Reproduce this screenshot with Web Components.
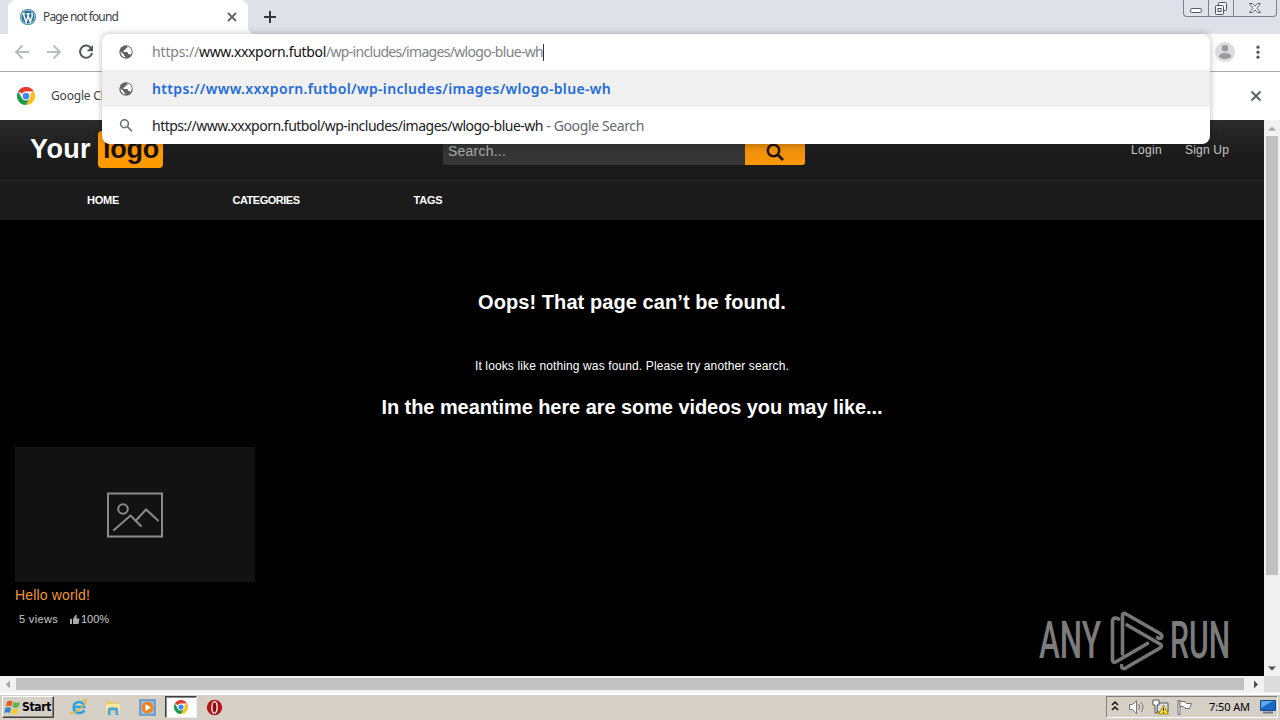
<!DOCTYPE html>
<html lang="en"><head><meta charset="utf-8"><title>Page not found</title>
<style>html,body{margin:0;width:1280px;height:720px;overflow:hidden;background:#000}</style></head>
<body><desktop-screen></desktop-screen>
<script>
const define=(name,css,html)=>customElements.define(name,class extends HTMLElement{
  constructor(){super();this.attachShadow({mode:'open'}).innerHTML=`<style>*{box-sizing:border-box}svg{display:block;flex:none}${css}</style>${html}`;}
});

/* One line of text tracked (or squeezed) to the width given in its "w" attribute. */
customElements.define('fit-text',class extends HTMLElement{
  constructor(){super();this.attachShadow({mode:'open'}).innerHTML='<style>:host{display:inline-block;white-space:pre;flex:none}span{display:inline-block;transform-origin:0 50%}</style><span><slot></slot></span>';}
  connectedCallback(){
    const s=this.shadowRoot.querySelector('span'),w=+this.getAttribute('w');
    const now=s.getBoundingClientRect().width,n=this.textContent.length;
    if(!w||!now)return;
    this.style.width=w+'px';
    if(this.hasAttribute('squeeze'))s.style.transform=`scaleX(${w/now})`;
    else s.style.letterSpacing=(w-now)/n+'px';
  }
});

define('chrome-logo',':host{display:block;width:18px;height:18px}svg{width:100%;height:100%}',
`<svg viewBox="0 0 24 24"><circle cx="12" cy="12" r="12" fill="#fff"/>
<path d="M12 12 1.6 6A12 12 0 0 1 22.4 6H12z" fill="#e33b2e"/><path d="M12 12 22.4 6A12 12 0 0 1 12 24l5.2-9z" fill="#fbc116"/><path d="M12 12l5.2 3L12 24A12 12 0 0 1 1.6 6l5.2 9z" fill="#1e9a4b"/>
<circle cx="12" cy="12" r="6" fill="#fff"/><circle cx="12" cy="12" r="4.5" fill="#4587ee"/></svg>`);

define('globe-icon',':host{display:block;width:16px;height:16px}',
`<svg width="16" height="16" viewBox="0 0 16 16"><circle cx="8" cy="8" r="6.7" fill="#5f6368"/><path d="M9.3 2.3c.2 1.7-.4 2.3-1.8 2.3-.1 1.4-.8 1.8-2 1.8v1.5h3.2c1.2 0 1.4.8 1.4 2 1.2-.1 2 .4 2.3 1.2A5.4 5.4 0 0 0 9.3 2.3zM2.6 7.4c-.1 3 1.5 5.4 4.6 6v-1.3c-.9 0-1.3-.6-1.3-1.6z" fill="#fff"/></svg>`);

define('window-buttons',`:host{display:flex;width:94px;height:17px;margin-right:3px;border:1px solid #7d828a;border-top:0;border-radius:0 0 4px 4px;background:#e0e3e9}
i{display:flex;justify-content:center;align-items:center;border-right:1px solid #7d828a}i:last-child{border:0}`,
`<i style="width:25px"><svg width="14" height="16"><rect x="1.5" y="8.5" width="11" height="4" rx="1.5" fill="#fff" stroke="#555b68"/></svg></i>
<i style="width:26px"><svg width="14" height="16" fill="#f4f5f8" stroke="#4d5361"><rect x="4.500" y="2.500" width="8" height="8" rx="1"/><rect x="1.500" y="5.500" width="8" height="9" rx="1"/><rect x="4" y="8.500" width="3" height="3"/></svg></i>
<i style="width:42px"><svg width="14" height="16"><path d="M1.500 3.500H4.500L7 6.300 9.500 3.500H12.500L8.800 8.200 12.500 12.500H9.500L7 9.900 4.500 12.500H1.500L5.200 8.200Z" fill="#fff" stroke="#5a606c"/></svg></i>`);

define('tab-strip',`:host{display:flex;height:34px;background:#dee1e8;font:12px/34px "Noto Sans",sans-serif;color:#3c4043}
.tab{width:240px;margin-left:8px;background:#fff;border-radius:8px 8px 0 0;display:flex;align-items:center;padding:0 10px 0 12px}
.tab fit-text{margin-left:7px;flex:1}.plus{margin:10px 0 0 15px}window-buttons{margin-left:auto}.x{margin-left:auto}
.foot{align-self:flex-end;width:8px;height:8px;background:radial-gradient(circle at 100% 0,#0000 8px,#fff 8.5px)}`,
`<div class="tab"><svg width="16" height="16" viewBox="0 0 16 16"><circle cx="8" cy="8" r="8" fill="#2b779d"/><circle cx="8" cy="8" r="6.900" fill="none" stroke="#c6dce7" stroke-width=".8"/><path d="M2.300 4.800h3M6.600 4.800h3.200M3.400 5l2.700 8 2-5.800M7.600 5l2.700 8 1.900-5.900c.5-1.500-.5-2.200-.5-3.400" fill="none" stroke="#fff" stroke-width="1.400"/></svg>
<fit-text w="75">Page not found</fit-text><svg class="x" width="12" height="12"><path d="m2 2 8 8m0-8-8 8" stroke="#5f6368" stroke-width="1.800"/></svg></div><div class="foot"></div>
<svg class="plus" style="margin-left:7px" width="14" height="14"><path d="M7 1v12M1 7h12" stroke="#34373c" stroke-width="2"/></svg><window-buttons></window-buttons>`);

define('tool-bar',`:host{display:flex;height:38px;background:#fff;border-bottom:1px solid #a9abad;align-items:center;padding:0 14px 1px 14px;gap:16px}.avatar{margin-left:auto}.dots{margin-left:-1px}`,
`<svg width="16" height="16" fill="none" stroke="#b9bbbe" stroke-width="1.800"><path d="M15 8H2M8.500 1.500 2 8l6.500 6.500"/></svg>
<svg width="16" height="16" fill="none" stroke="#b9bbbe" stroke-width="1.800"><path d="M1 8h13M7.500 1.500 14 8l-6.500 6.500"/></svg>
<svg width="16" height="16"><path d="M13.200 4.200A6.100 6.100 0 1 0 14.100 9" fill="none" stroke="#55585d" stroke-width="2"/><path d="M15 1v6.300H8.700z" fill="#55585d"/></svg>
<svg class="avatar" width="20" height="20"><circle cx="10" cy="10" r="10" fill="#dcdcde"/><circle cx="10" cy="6.200" r="3.200" fill="#9b9b9e"/><ellipse cx="10" cy="14" rx="6.200" ry="3" fill="#9b9b9e"/></svg>
<svg class="dots" width="16" height="16" fill="#55585d"><circle cx="8" cy="3.200" r="1.600"/><circle cx="8" cy="8.200" r="1.600"/><circle cx="8" cy="13.200" r="1.600"/></svg>`);

define('info-bar',`:host{display:flex;height:48px;background:#fff;align-items:center;padding:0 18px 0 17px;font:12px/48px "Noto Sans",sans-serif;color:#3c4043}fit-text{margin-left:16px}.x{margin-left:auto}`,
`<chrome-logo></chrome-logo><fit-text w="57">Google Ch</fit-text><svg class="x" width="12" height="12"><path d="m1.500 1.500 9 9m0-9-9 9" stroke="#5f6368" stroke-width="2"/></svg>`);

define('suggestion-row',`:host{display:flex;height:37px;align-items:center;padding-left:16px;font:14px/36px "Noto Sans",sans-serif;color:#202124}
:host([selected]){background:#f0f0f1}.txt{display:flex;margin-left:18px;align-items:center}`,
`<slot name="icon"></slot><div class="txt"><slot></slot></div>`);

define('omni-box',`:host{display:block;width:1108px;height:110px;background:#fff;border-radius:8px;overflow:hidden;box-shadow:0 0 6px 1px rgba(0,0,0,.22)}
.g{color:#808285}.b{color:#1f6bdc;font-weight:600}.s{color:#66696d}.caret{width:1px;height:17px;background:#333}.k{color:#111}
suggestion-row:first-of-type{height:36px}`,
`<suggestion-row><globe-icon slot="icon"></globe-icon><fit-text class="g" w="47">https://</fit-text><fit-text class="k" w="127">www.xxxporn.futbol</fit-text><fit-text class="g" w="217">/wp-includes/images/wlogo-blue-wh</fit-text><i class="caret"></i></suggestion-row>
<suggestion-row selected><globe-icon slot="icon"></globe-icon><fit-text class="b" w="459">https://www.xxxporn.futbol/wp-includes/images/wlogo-blue-wh</fit-text></suggestion-row>
<suggestion-row><svg slot="icon" width="16" height="16" fill="none" stroke="#6b6e72" stroke-width="1.600"><circle cx="6.500" cy="5.700" r="3.900"/><path d="m9.400 8.600 4.600 4.600"/></svg><fit-text w="391">https://www.xxxporn.futbol/wp-includes/images/wlogo-blue-wh</fit-text><fit-text class="s" w="101"> - Google Search</fit-text></suggestion-row>`);
/* The slotted rows leave 34px between the icon box and the text. */
define('site-header',`:host{display:block;background:#1b1b1b;font-family:"Liberation Sans",Arial,sans-serif}
.top{height:60px;display:flex;align-items:flex-start;background:linear-gradient(#2b2b2b,#1b1b1b 60%)}
.logo{display:flex;margin:11px 0 0 30px;font:bold 27px/37px "Liberation Sans",Arial,sans-serif;color:#fff;gap:7px}
.logo b{background:#ff9900;color:#1a1008;border-radius:4px;width:65px;height:37px;padding-left:5px}
.search{margin:17px 0 0 280px;display:flex;width:362px;height:28px;font-size:14px;line-height:29px;color:#aaa}
.in{width:302px;background:#353535;padding-left:5px}.go{width:60px;background:linear-gradient(#e08a10,#fd9808);border-radius:0 0 3px 0;display:flex;justify-content:center;padding-top:5px}
.links{display:flex;margin:20px 0 0 326px;gap:23px;font-size:12px;line-height:20px;color:#c9c9c9}
nav{height:40px;display:flex;border-top:1px solid #292929;font:bold 11px/39px "Liberation Sans",Arial,sans-serif;color:#fff;padding-left:87px}`,
`<div class="top"><div class="logo"><fit-text w="61">Your</fit-text><b><fit-text w="56">logo</fit-text></b></div>
<div class="search"><div class="in"><fit-text w="58">Search...</fit-text></div><div class="go"><svg width="20" height="20" fill="none" stroke="#1d1208"><circle cx="8.500" cy="8.500" r="5.700" stroke-width="2.400"/><path d="m12.500 12.500 5.500 5.500" stroke-width="2.600"/></svg></div></div>
<div class="links"><fit-text w="31">Login</fit-text><fit-text w="44">Sign Up</fit-text></div></div>
<nav><fit-text w="32">HOME</fit-text><fit-text w="67" style="margin-left:113.500px">CATEGORIES</fit-text><fit-text w="29" style="margin-left:114px">TAGS</fit-text></nav>`);

define('video-card',`:host{display:block;width:240px;font-family:"Liberation Sans",Arial,sans-serif}
.thumb{height:135px;background:#121212;display:flex;align-items:center;justify-content:center}
.title{font-size:14px;line-height:26px;height:26px;color:#f0973a}.meta{display:flex;align-items:center;padding-left:4px;height:22px;font-size:11px;line-height:22px;color:#ccc}.meta svg{margin:1px 1px 0 12px}`,
`<div class="thumb"><svg width="56" height="46" fill="none" stroke="#8b8b8b" stroke-width="2" stroke-linecap="round"><rect x="1" y="1.500" width="54" height="43"/><circle cx="16" cy="17" r="4.800"/><path d="m7 38 16.500-14.500L34 34M28.500 29 39 17.500 51 28.500"/></svg></div>
<div class="title"><fit-text w="75">Hello world!</fit-text></div>
<div class="meta"><fit-text w="39">5 views</fit-text><svg width="10" height="10" fill="#aaa"><path d="M0 4h2v5H0zM3 4 5.500 0h1.200L6.500 3.500H9.500L8.500 9H3z"/></svg><fit-text w="28">100%</fit-text></div>`);

define('anyrun-mark',`:host{display:flex;align-items:center;width:192px;height:62px;color:#7c7c7c;font:500 52px/62px Roboto,sans-serif}svg{margin:0 5px 0 8px}`,
`<fit-text w="62" squeeze>ANY</fit-text><svg width="56" height="62" fill="none" stroke="#777" stroke-width="3.600" stroke-linejoin="round" stroke-linecap="round"><path d="M9.500 9C6 7 3.500 8 3.500 12V49.500Q3.500 54 7.500 51.500L38.500 33.500M13.500 44V6Q13.500 2 17 4L51 23.500Q54.500 26 52 28.200 50 29 48.500 27.500M18 15 51 34Q54 36 51 38L17 57.800Q12.500 60 12.500 55.500"/></svg><fit-text w="60" squeeze>RUN</fit-text>`);

define('web-page',`:host{display:flex;flex-direction:column;width:1264px;height:556px;background:#000;color:#fff;font-family:"Liberation Sans",Arial,sans-serif}
.msg{display:flex;flex-direction:column;align-items:center;padding-top:68px}h2{margin:0;font-size:20px;line-height:28px;height:28px}p{margin:38px 0 15px;font-size:12px;line-height:24px;height:24px}
.row{display:flex;justify-content:space-between;padding:26px 33px 0 15px}anyrun-mark{margin-top:163px}`,
`<site-header></site-header><div class="msg"><h2><fit-text w="308">Oops! That page can’t be found.</fit-text></h2><p><fit-text w="314">It looks like nothing was found. Please try another search.</fit-text></p><h2><fit-text w="501">In the meantime here are some videos you may like...</fit-text></h2></div>
<div class="row"><video-card></video-card><anyrun-mark></anyrun-mark></div>`);

define('scroll-bar',`:host{display:flex;background:#f1f1f1;width:16px;height:556px;flex-direction:column}
:host([horizontal]){flex-direction:row;width:1264px;height:16px}
i{width:16px;height:16px;flex:none;display:flex;align-items:center;justify-content:center}i:last-child{margin:auto 0 0 auto}
b{width:12px;height:439px;margin:0 2px;background:#c1c1c1}:host([horizontal]) b{width:1228px;height:12px;margin:2px 0}
svg{transform:none}:host([horizontal]) svg{transform:rotate(-90deg)}`,
`<i><svg width="8" height="5"><path d="M0 4.500 4 .5l4 4z" fill="#a3a3a3"/></svg></i><b></b><i><svg width="8" height="5"><path d="M0 .5h8l-4 4z" fill="#505050"/></svg></i>`);

define('task-bar',`:host{display:flex;height:28px;background:#d5cfc6;border-top:1px solid #f2f1ee;box-shadow:inset 0 2px #fff;padding:3px 0 1px 2px;align-items:flex-start}
.start{width:52px;height:22px;border:1px solid;border-color:#fff #404040 #404040 #fff;box-shadow:inset -1px -1px #85817b;display:flex;align-items:center;font:bold 12px/20px "DejaVu Sans Condensed","DejaVu Sans",sans-serif;color:#000;padding-left:1px;gap:1px}
.q{display:flex;gap:0}.q>*{width:34px;height:22px;display:flex;align-items:center;justify-content:center}
.q .on{width:32px;margin:0 1px;background:#fff;border:1px solid;border-color:#404040 #eee #eee #404040;box-shadow:inset 1px 1px #888}
chrome-logo{width:14px;height:14px}
.tray{margin-left:auto;width:172px;height:22px;margin-right:2px;border:1px solid;border-color:#858079 #fff #fff #858079;display:flex;align-items:center;font:11px/20px "Noto Sans",sans-serif;color:#000;padding-left:2px}`,
`<div class="start"><svg width="17" height="17" viewBox="0 0 17 17"><path d="M3 2.500c2-1 4-1 5.500 0L7.500 7.500c-1.500-1-3.500-1-5.500 0z" fill="#e85f24"/><path d="M9.500 3c2 1 4.500 1 6.500 0l-1.500 5c-2 1-4 1-6 0z" fill="#62b146"/><path d="M1.500 9c2-1 4-1 5.500 0l-1.200 5c-1.500-1-3.500-1-5.500 0z" fill="#2d84ca"/><path d="M8.200 9.500c2 1 4 1 6 0L13 14.500c-2 1-4 1-6 0z" fill="#f8c92f"/></svg><fit-text w="29">Start</fit-text></div>
<div class="q" style="margin-left:8px"><div><svg width="18" height="18" fill="none"><path d="M14.300 12.200C11 17 3.300 15 3.700 9 4 2.500 14 2 14.200 9H5" stroke="#2ba3e0" stroke-width="2.600"/><path d="M1 14C-1 17.500 8 14 14 7c3-4 3-6.500-1-4.500" stroke="#e5b43b" stroke-width="1.400"/></svg></div>
<div><svg width="18" height="18"><path d="M2 3h5l1 1.500h7v9H2z" fill="#e8cc72"/><path d="M2 6h14v7H2z" fill="#f7e5a0"/><path d="M4 17v-6q0-1.500 1.500-1.500h7Q14 9.500 14 11v6h-2.500v-4.500h-5V17z" fill="#4ca6d5"/></svg></div>
<div><svg width="17" height="17"><rect x="1" y="1" width="15" height="15" fill="#8fc1e8" stroke="#3475b9"/><circle cx="8.500" cy="8.500" r="6" fill="#f0811d"/><path d="M6.500 5v7l5.500-3.500z" fill="#fff"/></svg></div>
<div class="on"><chrome-logo></chrome-logo></div>
<div style="width:32px"><svg width="17" height="17"><circle cx="8.500" cy="8.500" r="7.700" fill="#b51318"/><ellipse cx="8.500" cy="8.500" rx="2.600" ry="5.800" fill="#8d0c0d" stroke="#fff" stroke-width="1.300"/></svg></div></div>
<div class="tray"><svg width="12" height="14" fill="none" stroke="#111" stroke-width="1.500"><path d="m3 5 3-3 3 3M3 10l3-3 3 3"/></svg>
<svg style="margin-left:7px" width="18" height="16" fill="#fff" stroke="#777"><path d="M1.500 5.500h3l4-4v13l-4-4h-3z"/><path d="M10.500 5q2.500 3 0 6M13 3q4 5 0 10" fill="none"/></svg>
<svg style="margin-left:6px" width="18" height="16"><path d="M5 4h11v9H5z" fill="#dfe4e8" stroke="#555"/><path d="M1 1h6v5H5v8H3V6H1z" fill="#fff" stroke="#555"/><path d="m11.500 6 5 9h-10z" fill="#ffdc22" stroke="#a88512"/><path d="M11.500 9v3m0 1v1" stroke="#111"/></svg>
<svg style="margin-left:6px" width="18" height="16" fill="#fff" stroke="#6c6c6c"><path d="M2 1.500h2v14H2z"/><path d="M4 2.500h5l1.500 2h5l-2 5H9l-1.500-2H4z"/></svg>
<fit-text style="margin-left:15px" w="41">7:50 AM</fit-text>
<svg style="margin-left:10px" width="17" height="16"><path d="M.5 1.500h15v10H.5z" fill="#1769c5" stroke="#164c88"/><path d="M1 2h12L1 9z" fill="#5ca8ed"/><path d="M3 13.500h10" stroke="#6d7886" stroke-width="2"/></svg></div>`);

define('desktop-screen',`:host{display:flex;flex-direction:column;width:1280px;height:720px;position:relative}
.view{display:grid;grid-template-columns:1264px 16px;grid-template-rows:556px 16px}.corner{background:#dcdcdc}
omni-box{position:absolute;left:102px;top:34px}`,
`<tab-strip></tab-strip><tool-bar></tool-bar><info-bar></info-bar>
<div class="view"><web-page></web-page><scroll-bar></scroll-bar><scroll-bar horizontal></scroll-bar><div class="corner"></div></div>
<task-bar></task-bar><omni-box></omni-box>`);
</script></body></html>
